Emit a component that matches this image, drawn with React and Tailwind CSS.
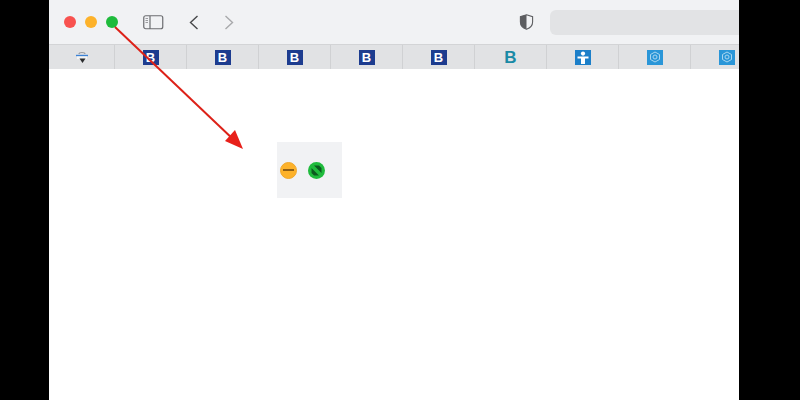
const font = { fontFamily: '"Liberation Sans", sans-serif' };

function BTab() {
  return (
    <div className="w-[72px] shrink-0 h-full border-r border-[#d0d1d3] flex items-center justify-center">
      <div className="w-4 h-[15px] bg-[#1d3c8f] flex items-center justify-center text-white font-bold text-[13px] leading-none" style={font}>B</div>
    </div>
  );
}

function Cube() {
  return (
    <div className="w-4 h-[15px] bg-[#2a96d8] flex items-center justify-center">
      <svg width="12" height="12" viewBox="0 0 12 12" fill="none" stroke="#a9d6f0" strokeWidth="1">
        <path d="M6 1 L10.5 3.5 V8.5 L6 11 L1.5 8.5 V3.5 Z" />
        <circle cx="6" cy="6" r="2" />
      </svg>
    </div>
  );
}

function Tab({ children, last }) {
  return (
    <div className={"w-[72px] shrink-0 h-full flex items-center justify-center " + (last ? "" : "border-r border-[#d0d1d3]")}>
      {children}
    </div>
  );
}

export default function App() {
  return (
    <div className="w-[800px] h-[400px] bg-black flex overflow-hidden relative">
      <div className="w-[49px] shrink-0" />
      <div className="w-[690px] shrink-0 bg-white flex flex-col overflow-hidden">
        <div className="h-[44px] shrink-0 bg-[#f1f2f4] flex items-center">
          <div className="flex items-center gap-[9px] ml-[15px]">
            <div className="w-3 h-3 rounded-full bg-[#f8524f]" />
            <div className="w-3 h-3 rounded-full bg-[#fdb22a]" />
            <div className="w-3 h-3 rounded-full bg-[#1fbb3c]" />
          </div>
          <svg className="ml-[25px]" width="21" height="15" viewBox="0 0 21 15" fill="none">
            <rect x="0.75" y="0.75" width="19" height="13" rx="2" stroke="#6c6d70" strokeWidth="1.2" />
            <path d="M7 1 V14" stroke="#6c6d70" strokeWidth="1.2" />
            <path d="M2.5 3.5 H5 M2.5 5.5 H5 M2.5 7.5 H5" stroke="#9a9b9e" strokeWidth="1" />
          </svg>
          <svg className="ml-[25px]" width="10" height="15" viewBox="0 0 10 15" fill="none">
            <path d="M8.5 1 L1.5 7.5 L8.5 14" stroke="#47484a" strokeWidth="1.4" />
          </svg>
          <svg className="ml-[25px]" width="10" height="15" viewBox="0 0 10 15" fill="none">
            <path d="M1.5 1 L8.5 7.5 L1.5 14" stroke="#a8a9ab" strokeWidth="1.4" />
          </svg>
          <svg className="ml-[285px]" width="15" height="16" viewBox="0 0 15 16">
            <path d="M7.5 0.8 L13.6 2.6 V8 C13.6 11.5 11 14 7.5 15.2 C4 14 1.4 11.5 1.4 8 V2.6 Z" fill="#f1f2f4" stroke="#5c5d60" strokeWidth="1.1" />
            <path d="M7.5 0.8 L1.4 2.6 V8 C1.4 11.5 4 14 7.5 15.2 Z" fill="#5c5d60" />
          </svg>
          <div className="ml-[16px] flex-1 h-[25px] bg-[#e2e3e5] rounded-l-[6px]" />
        </div>
        <div className="h-[25px] shrink-0 bg-[#e1e2e4] border-t border-[#d3d4d6] flex items-stretch">
          <div className="w-[66px] shrink-0 h-full border-r border-[#d0d1d3] flex items-center justify-center">
            <svg width="14" height="13" viewBox="0 0 14 13" fill="none">
              <path d="M4 3 C4 1 10 1 10 3" stroke="#9a9b9e" strokeWidth="1.2" />
              <path d="M1 4.5 H13" stroke="#3b82d6" strokeWidth="1.4" />
              <path d="M2 5.5 H12 V8 H2 Z" fill="#f3f4f5" />
              <path d="M4.5 7.5 L7.5 12 L10.5 7.5 Z" fill="#2b2c2e" />
            </svg>
          </div>
          <BTab /><BTab /><BTab /><BTab /><BTab />
          <Tab>
            <span className="text-[#1a8aa6] font-bold text-[17px] leading-none" style={font}>B</span>
          </Tab>
          <Tab>
            <div className="w-4 h-[15px] bg-[#1c7fc9] flex items-center justify-center">
              <svg width="12" height="13" viewBox="0 0 12 13" fill="#ffffff">
                <circle cx="6" cy="2.6" r="2.1" />
                <path d="M0.5 5.5 H11.5 V7.5 H8 V13 H4 V7.5 H0.5 Z" />
              </svg>
            </div>
          </Tab>
          <Tab><Cube /></Tab>
          <Tab last><Cube /></Tab>
        </div>
        <div className="flex-1 relative">
          <div className="absolute left-[228px] top-[73px] w-[65px] h-[56px] bg-[#f1f2f4] flex items-center pl-[3px] gap-[11px]">
            <div className="w-[17px] h-[17px] rounded-full bg-[#fdb22a] border border-[#f0a82c] flex items-center justify-center">
              <div className="w-[11px] h-[2px] bg-[#8f5f14]" />
            </div>
            <div className="w-[17px] h-[17px] rounded-full bg-[#1fbb3c] flex items-center justify-center">
              <svg width="11" height="11" viewBox="0 0 11 11" fill="#0c5a1f">
                <path d="M0.5 3 L3 0.5 H8 L0.5 8 Z M10.5 3 V8 L8 10.5 H3 Z" transform="rotate(90 5.5 5.5)" />
              </svg>
            </div>
          </div>
        </div>
      </div>
      <svg className="absolute left-0 top-0 pointer-events-none" width="800" height="400" viewBox="0 0 800 400" fill="none">
        <path d="M115 27 L235 141" stroke="#dd2118" strokeWidth="2" />
        <path d="M243 149 L225 141 L235 130 Z" fill="#e8201a" />
      </svg>
    </div>
  );
}
